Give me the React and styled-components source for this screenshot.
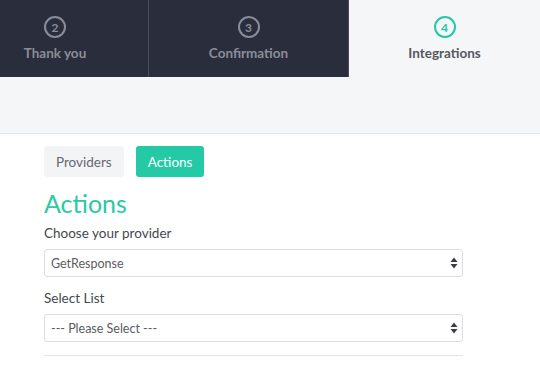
import React from 'react';
import styled, { createGlobalStyle } from 'styled-components';

const GlobalStyle = createGlobalStyle`
  body {
    margin: 0;
    background: #ffffff;
    font-family: Lato, "Open Sans", sans-serif;
  }
`;

const Page = styled.div`
  width: 540px;
  height: 380px;
  overflow: hidden;
`;

const Steps = styled.div`
  display: flex;
  height: 77px;
  margin-left: -38px;
  background: #2a2d3b;
`;

const Step = styled.div`
  flex: 0 0 ${props => props.w}px;
  display: flex;
  flex-direction: column;
  align-items: center;
  padding-top: 16px;
  box-sizing: border-box;
  border-right: 1px solid ${props => (props.active ? 'transparent' : '#4a4d5a')};
  background: ${props => (props.active ? '#f5f6f8' : '#2a2d3b')};
  color: ${props => (props.active ? '#555861' : '#8a8d98')};
`;

const Circle = styled.div`
  width: 22px;
  height: 22px;
  box-sizing: border-box;
  border-radius: 50%;
  border: 2px solid ${props => (props.active ? '#26c9a6' : '#8a8d98')};
  color: ${props => (props.active ? '#26c9a6' : '#8a8d98')};
  display: flex;
  align-items: center;
  justify-content: center;
  font-size: 12px;
  font-weight: 700;
`;

const StepLabel = styled.div`
  margin-top: 7px;
  font-size: 13.5px;
  font-weight: 700;
`;

const Band = styled.div`
  height: 56px;
  background: #f5f6f8;
  border-bottom: 1px solid #e4e5e9;
`;

const Content = styled.div`
  padding: 12px 0 0 44px;
  width: 419px;
`;

const Tabs = styled.div`
  display: flex;
  gap: 12px;
`;

const TabButton = styled.button`
  height: 31px;
  padding: 0 12px;
  border: none;
  border-radius: 3px;
  font-family: inherit;
  font-size: 13.5px;
  background: ${props => (props.active ? '#24caa6' : '#f3f4f6')};
  color: ${props => (props.active ? '#ffffff' : '#666870')};
`;

const Heading = styled.h2`
  margin: 11px 0 0;
  font-size: 25px;
  font-weight: 400;
  line-height: 30px;
  color: #2bc9a4;
`;

const Label = styled.div`
  margin-top: ${props => props.top}px;
  font-size: 13.5px;
  color: #45474f;
  line-height: 18px;
`;

const SelectWrap = styled.div`
  position: relative;
  margin-top: 7px;
`;

const Select = styled.select`
  display: block;
  width: 100%;
  height: 28px;
  appearance: none;
  -webkit-appearance: none;
  border: 1px solid #dcdde2;
  border-radius: 3px;
  background: #ffffff;
  padding: 0 6px;
  font-family: inherit;
  font-size: 12.5px;
  color: #5a5c63;
`;

const Arrows = styled.svg`
  position: absolute;
  right: 5px;
  top: 8px;
  pointer-events: none;
`;

const Divider = styled.div`
  margin-top: 13px;
  border-top: 1px solid #e4e5e9;
`;

function UpDown() {
  return (
    <Arrows width="8" height="12" viewBox="0 0 8 12">
      <path d="M4 0.5 L7.5 5 H0.5 Z" fill="#3a3c44" />
      <path d="M4 11.5 L7.5 7 H0.5 Z" fill="#3a3c44" />
    </Arrows>
  );
}

export default function App() {
  return (
    <Page>
      <GlobalStyle />
      <Steps>
        <Step w={187}>
          <Circle>2</Circle>
          <StepLabel>Thank you</StepLabel>
        </Step>
        <Step w={200}>
          <Circle>3</Circle>
          <StepLabel>Confirmation</StepLabel>
        </Step>
        <Step w={192} active>
          <Circle active>4</Circle>
          <StepLabel>Integrations</StepLabel>
        </Step>
      </Steps>
      <Band />
      <Content>
        <Tabs>
          <TabButton>Providers</TabButton>
          <TabButton active>Actions</TabButton>
        </Tabs>
        <Heading>Actions</Heading>
        <Label top={6}>Choose your provider</Label>
        <SelectWrap>
          <Select defaultValue="getresponse">
            <option value="getresponse">GetResponse</option>
          </Select>
          <UpDown />
        </SelectWrap>
        <Label top={12}>Select List</Label>
        <SelectWrap>
          <Select defaultValue="">
            <option value="">--- Please Select ---</option>
          </Select>
          <UpDown />
        </SelectWrap>
        <Divider />
      </Content>
    </Page>
  );
}
